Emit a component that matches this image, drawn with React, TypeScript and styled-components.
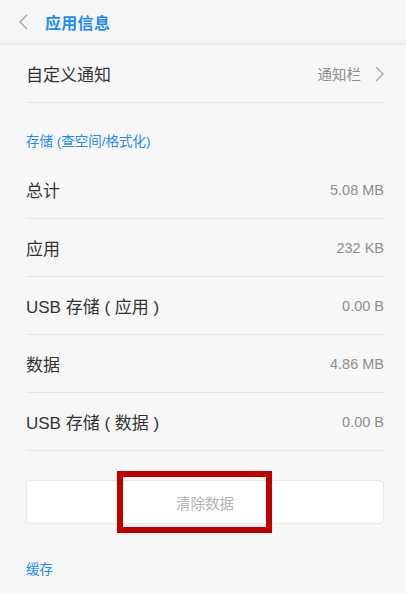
import React from 'react';
import styled, { createGlobalStyle } from 'styled-components';

const GlobalStyle = createGlobalStyle`
  html, body {
    margin: 0;
    padding: 0;
    background: #f7f7f7;
  }
  body {
    font-family: "Noto Sans CJK SC", "Liberation Sans", sans-serif;
  }
`;

const BLUE = '#1f8bf5';

const Page = styled.div`
  width: 406px;
  height: 594px;
  overflow: hidden;
  background: #f7f7f7;
  display: flex;
  flex-direction: column;
`;

const Header = styled.div`
  height: 43px;
  display: flex;
  align-items: center;
  padding-left: 19px;
  background: #f5f5f5;
  border-bottom: 2px solid #e9e9e9;
`;

const BackButton = styled.div`
  width: 13px;
  height: 20px;
  display: flex;
  align-items: center;
  margin-right: 13px;
`;

const HeaderTitle = styled.div`
  font-size: 16px;
  font-weight: 700;
  color: ${BLUE};
  letter-spacing: 0.3px;
`;

const Content = styled.div`
  padding: 0 22px 0 26px;
  display: flex;
  flex-direction: column;
`;

const Row = styled.div`
  height: 57px;
  display: flex;
  align-items: center;
  justify-content: space-between;
  border-bottom: 1px solid #e6e6e6;
`;

const RowLabel = styled.div`
  font-size: 17px;
  color: #333;
  font-family: "Liberation Sans", "Noto Sans CJK SC", sans-serif;
  white-space: pre;
`;

const RowRight = styled.div`
  display: flex;
  align-items: center;
  gap: 14px;
`;

const RowValue = styled.div`
  font-size: 14.5px;
  color: #8e8e8e;
  font-family: "Liberation Sans", "Noto Sans CJK SC", sans-serif;
`;

const SectionLabel = styled.div<{ $top: number }>`
  font-size: 13.5px;
  color: ${BLUE};
  padding-top: ${p => p.$top}px;
  padding-bottom: 10px;
  line-height: 18px;
  font-family: "Liberation Sans", "Noto Sans CJK SC", sans-serif;
`;

const ButtonWrap = styled.div`
  position: relative;
  margin-top: 29px;
`;

const ClearButton = styled.div`
  height: 42px;
  background: #ffffff;
  border: 1px solid #e8e8e8;
  border-radius: 4px;
  display: flex;
  align-items: center;
  justify-content: center;
  font-size: 14.5px;
  color: #b3b3b3;
`;

const Highlight = styled.div`
  position: absolute;
  left: 91px;
  top: -9px;
  width: 143px;
  height: 50px;
  border: 6px solid #c00000;
`;

const Chevron: React.FC<{ dir: 'left' | 'right'; color: string }> = ({ dir, color }) => (
  <svg width="9" height="16" viewBox="0 0 9 16">
    <path
      d={dir === 'left' ? 'M8 1 L1 8 L8 15' : 'M1 1 L8 8 L1 15'}
      fill="none"
      stroke={color}
      strokeWidth="1.3"
    />
  </svg>
);

const storage = [
  { label: '总计', value: '5.08 MB' },
  { label: '应用', value: '232 KB' },
  { label: 'USB 存储 ( 应用 )', value: '0.00 B' },
  { label: '数据', value: '4.86 MB' },
  { label: 'USB 存储 ( 数据 )', value: '0.00 B' }
];

export default function App() {
  return (
    <Page>
      <GlobalStyle />
      <Header>
        <BackButton>
          <Chevron dir="left" color="#a0a0a0" />
        </BackButton>
        <HeaderTitle>应用信息</HeaderTitle>
      </Header>
      <Content>
        <Row>
          <RowLabel>自定义通知</RowLabel>
          <RowRight>
            <RowValue>通知栏</RowValue>
            <Chevron dir="right" color="#a8a8a8" />
          </RowRight>
        </Row>
        <SectionLabel $top={30}>存储 (查空间/格式化)</SectionLabel>
        {storage.map(item => (
          <Row key={item.label}>
            <RowLabel>{item.label}</RowLabel>
            <RowValue>{item.value}</RowValue>
          </Row>
        ))}
        <ButtonWrap>
          <ClearButton>清除数据</ClearButton>
          <Highlight />
        </ButtonWrap>
        <SectionLabel $top={37}>缓存</SectionLabel>
      </Content>
    </Page>
  );
}
